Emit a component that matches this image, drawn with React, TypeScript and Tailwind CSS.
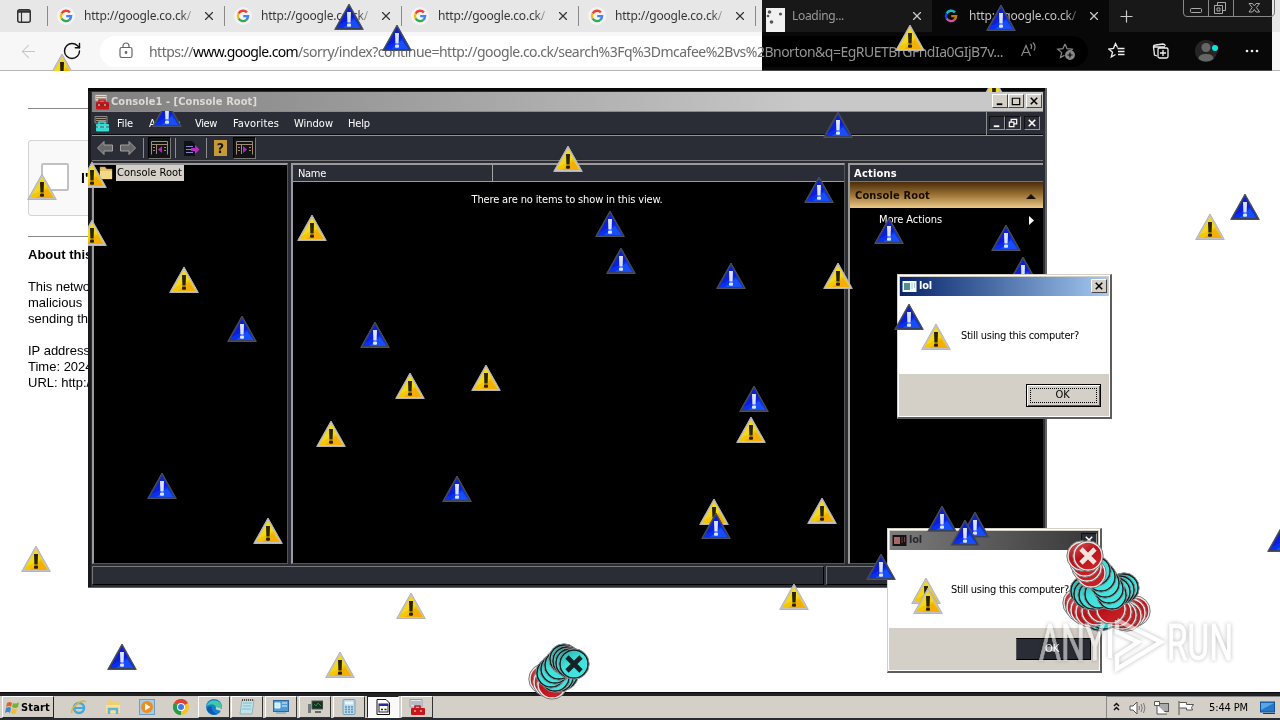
import { useLayoutEffect, useRef } from 'react'
import type { ReactNode } from 'react'
import { ArrowLeft, Plus, RotateCw, X } from 'lucide-react'

const URL_TAIL = '/sorry/index?continue=http://google.co.ck/search%3Fq%3Dmcafee%2Bvs%2Bnorton&q=EgRUETBrGFhdIa0GIjB7v...'

type Tone = 'yellow' | 'blue'
// x is the center, y the top edge
interface Marker {
  tone: Tone
  x: number
  y: number
  clip?: string
}

const markers: Marker[] = [
  { tone: 'yellow', x: 62, y: 53, clip: 'inset(0 0 10px 0)' },
  { tone: 'yellow', x: 910, y: 24 },
  { tone: 'yellow', x: 42, y: 173 },
  { tone: 'yellow', x: 92, y: 161, clip: 'inset(0 0 0 11px)' },
  { tone: 'yellow', x: 92, y: 219, clip: 'inset(0 0 0 11px)' },
  { tone: 'yellow', x: 312, y: 214 },
  { tone: 'yellow', x: 568, y: 145 },
  { tone: 'yellow', x: 184, y: 266 },
  { tone: 'yellow', x: 838, y: 262 },
  { tone: 'yellow', x: 410, y: 372 },
  { tone: 'yellow', x: 486, y: 364 },
  { tone: 'yellow', x: 331, y: 420 },
  { tone: 'yellow', x: 751, y: 416 },
  { tone: 'yellow', x: 714, y: 498 },
  { tone: 'yellow', x: 822, y: 497 },
  { tone: 'yellow', x: 268, y: 517 },
  { tone: 'yellow', x: 36, y: 545 },
  { tone: 'yellow', x: 411, y: 592 },
  { tone: 'yellow', x: 794, y: 583 },
  { tone: 'yellow', x: 340, y: 651 },
  { tone: 'yellow', x: 1210, y: 213 },
  { tone: 'yellow', x: 994, y: 77, clip: 'inset(11px 0 13px 0)' },
  { tone: 'blue', x: 349, y: 3 },
  { tone: 'blue', x: 397, y: 24 },
  { tone: 'blue', x: 1001, y: 4 },
  { tone: 'blue', x: 167, y: 100, clip: 'inset(11px 0 1px 0)' },
  { tone: 'blue', x: 838, y: 111 },
  { tone: 'blue', x: 819, y: 176 },
  { tone: 'blue', x: 610, y: 210 },
  { tone: 'blue', x: 621, y: 247 },
  { tone: 'blue', x: 731, y: 262 },
  { tone: 'blue', x: 889, y: 217 },
  { tone: 'blue', x: 1006, y: 224 },
  { tone: 'blue', x: 1023, y: 256, clip: 'inset(0 0 8px 0)' },
  { tone: 'blue', x: 242, y: 315 },
  { tone: 'blue', x: 375, y: 321 },
  { tone: 'blue', x: 754, y: 385 },
  { tone: 'blue', x: 162, y: 472 },
  { tone: 'blue', x: 457, y: 475 },
  { tone: 'blue', x: 716, y: 512 },
  { tone: 'blue', x: 122, y: 643 },
  { tone: 'blue', x: 1245, y: 193 },
  { tone: 'blue', x: 1282, y: 525 },
]

// drawn over the dialogs
const topMarkers: Marker[] = [
  { tone: 'blue', x: 909, y: 303 },
  { tone: 'blue', x: 942, y: 505 },
  { tone: 'blue', x: 975, y: 511 },
  { tone: 'blue', x: 965, y: 519 },
  { tone: 'blue', x: 881, y: 553 },
]

type Disc = [number, number, 'r' | 'c']

const discs: Disc[] = [
  [544, 679, 'r'], [548, 682, 'r'], [552, 684, 'r'],
  [563, 675, 'c'], [559, 677, 'c'], [555, 677, 'c'], [551, 673, 'c'],
  [555, 669, 'c'], [559, 665, 'c'], [564, 659, 'c'], [567, 661, 'c'], [570, 663, 'c'], [574, 664, 'c'],
  [1099, 616, 'c'], [1104, 615, 'c'],
  [1078, 603, 'r'], [1081, 607, 'r'], [1085, 610, 'r'], [1090, 612, 'r'], [1096, 611, 'r'], [1102, 608, 'r'],
  [1135, 611, 'r'], [1131, 613, 'r'], [1127, 616, 'r'], [1122, 615, 'r'], [1117, 612, 'r'], [1111, 609, 'r'],
  [1124, 588, 'c'], [1120, 590, 'c'],
  [1085, 591, 'c'], [1088, 594, 'c'], [1093, 595, 'c'], [1099, 594, 'c'],
  [1116, 592, 'c'], [1112, 595, 'c'], [1109, 589, 'c'], [1105, 583, 'c'], [1101, 577, 'c'], [1096, 571, 'c'],
  [1091, 573, 'r'], [1087, 567, 'r'], [1085, 562, 'r'], [1082, 556, 'r'],
  [1088, 556, 'r'],
]

// Spreads the letters so that the text fills exactly `w` pixels
function Fit({ w, className = '', children }: { w: number; className?: string; children: string }) {
  const ref = useRef<HTMLSpanElement>(null)
  useLayoutEffect(() => {
    const el = ref.current
    if (!el) return
    el.style.letterSpacing = '0px'
    const natural = el.getBoundingClientRect().width
    el.style.letterSpacing = `${(w - natural) / children.length}px`
  }, [w, children])
  return (
    <span ref={ref} className={`inline-block shrink-0 whitespace-pre ${className}`}>
      {children}
    </span>
  )
}

function Warning({ tone }: { tone: Tone }) {
  const blue = tone === 'blue'
  return (
    <svg width="30" height="28" viewBox="0 0 30 28" className="block">
      <path d="M15 1 L29.3 26.5 H0.7 Z" fill={blue ? '#3a4058' : '#c4c3c9'} stroke={blue ? '#4b5063' : '#b5b3b3'} strokeWidth="1" strokeLinejoin="round" />
      <path d="M15 4 L27 25 H3 Z" fill={blue ? '#0830ee' : '#f6c604'} />
      <path d="M15 4 L20.5 14 L5 22 Z" fill={blue ? '#0d18d2' : '#f1df1f'} opacity="0.75" />
      <path d="M20 16 L26.5 25 H9 Z" fill={blue ? '#1e5bff' : '#f2a40a'} opacity="0.7" />
      <path d="M13 9 H17 L16.6 19.5 H13.4 Z" fill={blue ? '#dce4fb' : '#28220f'} />
      <rect x="13" y="20.6" width="4" height="3.2" rx="1" fill={blue ? '#dce4fb' : '#28220f'} />
    </svg>
  )
}

function Discs() {
  const crossed = [12, discs.length - 1]
  return (
    <svg width="1280" height="720" viewBox="0 0 1280 720" className="absolute left-0 top-0">
      <defs>
        <linearGradient id="red" x1="0" y1="0" x2="0.6" y2="1">
          <stop offset="0" stopColor="#d8555a" />
          <stop offset="0.5" stopColor="#b81219" />
          <stop offset="1" stopColor="#cc2227" />
        </linearGradient>
        <linearGradient id="cyan" x1="0" y1="0" x2="0.6" y2="1">
          <stop offset="0" stopColor="#28aaa5" />
          <stop offset="0.5" stopColor="#41e0da" />
          <stop offset="1" stopColor="#3fe6e0" />
        </linearGradient>
      </defs>
      {discs.map(([x, y, c], i) => (
        <g key={i}>
          <circle cx={x} cy={y} r="15.2" fill={c === 'r' ? '#efeaea' : '#10191c'} stroke={c === 'r' ? '#777' : '#8a8f90'} strokeWidth="1" />
          <circle cx={x} cy={y} r="13.3" fill={c === 'r' ? 'url(#red)' : 'url(#cyan)'} />
          {crossed.includes(i) && (
            <path
              d={`M${x - 7} ${y - 7} L${x + 7} ${y + 7} M${x + 7} ${y - 7} L${x - 7} ${y + 7}`}
              stroke={c === 'r' ? '#efe6e2' : '#182325'}
              strokeWidth="4.6"
            />
          )}
        </g>
      ))}
    </svg>
  )
}

function GoogleIcon() {
  return (
    <svg width="18" height="18" viewBox="0 0 18 18" className="shrink-0">
      <circle cx="9" cy="9" r="9" fill="#f4f4f4" />
      <g fill="none" strokeWidth="2.4">
        <path d="M12.9 5.4 A5.1 5.1 0 0 0 4.6 6.5" stroke="#ea4335" />
        <path d="M4.6 6.5 A5.1 5.1 0 0 0 4.6 11.5" stroke="#fbbc05" />
        <path d="M4.6 11.5 A5.1 5.1 0 0 0 12.4 12.8" stroke="#34a853" />
        <path d="M12.4 12.8 A5.1 5.1 0 0 0 14.1 9.1 H9.2" stroke="#4285f4" />
      </g>
    </svg>
  )
}

function Tab({ title, active = false, loading = false }: { title: string; active?: boolean; loading?: boolean }) {
  return (
    <div className={`flex h-8 w-[177px] shrink-0 items-center ${active ? 'bg-[#f7f7f7]' : 'bg-[#e7e7e7]'}`}>
      <span className={`mr-[9px] h-[20px] w-px ${active ? 'bg-transparent' : 'bg-[#8a8a8a]'}`} />
      {loading ? <span className="w-[18px] shrink-0" /> : <GoogleIcon />}
      <div className="ml-[9px] w-[110px] overflow-hidden text-[12px] leading-8 text-[#333]">
        {loading ? (
          <Fit w={52} className="text-[#666]">{title}</Fit>
        ) : (
          <Fit w={107} className="bg-linear-to-r from-[#333] from-90% to-[#aaa] bg-clip-text text-transparent">{title}</Fit>
        )}
      </div>
      <X size={14} strokeWidth={2} className="ml-[8px] text-[#333]" />
    </div>
  )
}

function Browser() {
  return (
    <div className="w-full font-['Noto_Sans',sans-serif]">
      <div className="flex h-8 bg-[#e7e7e7]">
        <div className="flex w-[47px] shrink-0 items-center justify-center">
          <svg width="14" height="14" viewBox="0 0 14 14" fill="none" stroke="#333">
            <rect x="0.750" y="0.750" width="12.500" height="12.500" rx="2" strokeWidth="1.500" />
            <path d="M1 2.500 H13" strokeWidth="2.500" />
            <path d="M4.500 3 V13" strokeWidth="1.200" />
          </svg>
        </div>
        <Tab title="http://google.co.ck/" />
        <Tab title="http://google.co.ck/" />
        <Tab title="http://google.co.ck/" />
        <Tab title="http://google.co.ck/" />
        <Tab title="Loading..." loading />
        <Tab title="http://google.co.ck/" active />
        <div className="flex w-[34px] shrink-0 items-center justify-center">
          <Plus size={19} strokeWidth={1.5} className="text-[#333]" />
        </div>
        <svg width="97" height="20" viewBox="0 0 97 20" className="ml-[39px] shrink-0" fill="none" stroke="#777" strokeWidth="1">
          <path d="M1.5 0 V13 Q1.5 16.5 5 16.5 H88 Q92.5 16.5 92.5 12 V0 M26.5 0 V16 M51.5 0 V16" />
          <rect x="8.500" y="8.500" width="11" height="4" rx="1" stroke="#555" />
          <path d="M32.500 5.500 h8 v8 h-8 z M35.500 5 v-2.500 h8 v8 h-3 M35 8 h3 v3 h-3 z" stroke="#555" />
          <path d="M67 3.500 h3.500 l1.800 2.400 l1.800 -2.400 h3.500 l-3.200 4 l3.200 4.500 h-3.500 l-1.800 -2.500 l-1.800 2.500 h-3.500 l3.200 -4.500 z" stroke="#555" />
        </svg>
      </div>
      <div className="flex h-[39px] items-center border-b border-[#b5b5b5] bg-[#f7f7f7]">
        <ArrowLeft size={21} strokeWidth={1.2} className="ml-[18px] shrink-0 text-[#c6c6c6]" />
        <RotateCw size={20} strokeWidth={1.7} className="ml-[23px] shrink-0 text-[#111]" />
        <div className="ml-[18px] flex h-[31px] w-[988px] shrink-0 items-center rounded-full bg-white pl-[20px] text-[14px] leading-[31px] text-[#6b6b6b]">
          <svg width="14" height="17" viewBox="0 0 14 17" fill="none" stroke="#666" strokeWidth="1.2" className="mb-[2px] ml-[-1px] mr-[16px] shrink-0">
            <rect x="1" y="5.500" width="12" height="10" rx="1.800" />
            <path d="M4 5.500 V4 a3 3 0 0 1 6 0 V5.500" />
            <circle cx="7" cy="10.500" r="0.800" fill="#666" />
          </svg>
          <Fit w={44}>https://</Fit>
          <Fit w={105} className="text-black">www.google.com</Fit>
          <Fit w={705}>{URL_TAIL}</Fit>
          <svg width="60" height="20" viewBox="0 0 60 20" fill="none" stroke="#777" strokeWidth="1.2" className="ml-[17px] shrink-0">
            <path d="M1.500 15 L6 4.500 L10.500 15 M3 11.500 H9 M10.500 3 q2 2 0.500 5 M13 1.500 q3.500 3.500 1 8" />
            <path d="M45 3 l2 4.600 l5.300 0.500 l-3.800 3.500 M45 3 l-2 4.600 l-5.300 0.500 l4 3.500 l-1.200 5 l4 -2.300" />
            <circle cx="50" cy="14" r="4.300" fill="#777" />
            <path d="M50 11.500 v5 M47.500 14 h5" stroke="#fff" />
          </svg>
        </div>
        <svg width="170" height="24" viewBox="0 0 170 24" fill="none" stroke="#111" strokeWidth="1.300" className="ml-[20px] shrink-0">
          <path d="M9.500 8.500 L7.500 4.500 L5.500 9.300 L0.800 10 L4.500 13.200 L3.300 18 L7.500 15.500 M9.500 9.500 H16.500 M10 12.500 H16.500 M10 15.500 H16.500" />
          <path d="M49 17 l-2.500 -1 l-1 -8 q0 -2 2 -2 l7.500 -1 q2 0 2.300 2 M46 8 h11" />
          <rect x="50" y="9" width="10" height="10" rx="1.500" />
          <path d="M55 11 v6 M52 14 h6" />
          <circle cx="98" cy="12" r="11" fill="#dadada" stroke="none" />
          <circle cx="98" cy="8.500" r="4.500" fill="#999" stroke="none" />
          <path d="M90.500 20 q0 -5 7.500 -5 t7.500 5 q-7.500 5 -15 0" fill="#999" stroke="none" />
          <circle cx="107" cy="9" r="3" fill="#ee1c20" stroke="none" />
          <g fill="#111" stroke="none">
            <circle cx="139" cy="12" r="1.300" />
            <circle cx="144" cy="12" r="1.300" />
            <circle cx="149" cy="12" r="1.300" />
          </g>
        </svg>
      </div>
    </div>
  )
}

function PageText() {
  return (
    <div className="ml-[28px] w-[300px] pt-[37px] font-['Liberation_Sans',sans-serif] text-[13px] leading-4 text-black">
      <div className="h-px bg-[#888]" />
      <div className="mt-[31px] flex h-[76px] items-center rounded-[3px] border border-[#d3d3d3] bg-[#f9f9f9] pl-[12px]">
        <div className="mb-[3px] h-[28px] w-[28px] rounded-[2px] border-2 border-[#c1c1c1] bg-white" />
        <span className="ml-[12px] text-[14px] font-bold">I'</span>
      </div>
      <div className="mt-[20px] h-px bg-[#888]" />
      <div className="mt-[10px] font-bold">About this</div>
      <div className="mt-[16px] whitespace-nowrap">
        <Fit w={62}>This netwo</Fit>
        <br />
        malicious
        <br />
        sending th
      </div>
      <div className="mt-[16px]">
        IP address
        <br />
        Time: 2024
        <br />
        URL: http:/
      </div>
    </div>
  )
}

function CaptionButton({ kind, dark = false }: { kind: 'min' | 'max' | 'restore' | 'close'; dark?: boolean }) {
  const glyph = {
    min: <path d="M4 10 H10" strokeWidth="2" />,
    max: <path d="M3.500 3.500 H11.500 V10.500 H3.500 Z M3 3.500 H12" strokeWidth="1.300" />,
    restore: <path d="M5.500 5 V2.500 H11.500 V7.500 H9 M3.500 5.500 H8.500 V10.500 H3.500 Z" strokeWidth="1.300" />,
    close: <path d="M4 3 L11 10 M11 3 L4 10" strokeWidth="1.700" />,
  }[kind]
  return (
    <span
      className={`block h-[14px] w-4 border ${
        dark ? 'border-b-[#9a9a9a] border-l-[#111] border-r-[#9a9a9a] border-t-[#111] bg-[#2a2d35] text-white' : 'border-b-[#444] border-l-white border-r-[#444] border-t-white bg-[#d4d0c8] text-black'
      }`}
    >
      <svg width="14" height="12" viewBox="0 0 15 13" fill="none" stroke="currentColor">
        {glyph}
      </svg>
    </span>
  )
}

function Toolbox({ color }: { color: string }) {
  return (
    <svg width="16" height="16" viewBox="0 0 16 16" className="shrink-0">
      <path d="M1 0.500 H13 V7 H1 Z" fill={color === '#c4161c' ? '#dadce3' : '#30343a'} stroke="#888" />
      <path d="M2 2.500 H12 M2 4.500 H12" stroke="#a49382" />
      <path d="M5 8 V6 H11 V8" fill="none" stroke={color} strokeWidth="1.500" />
      <rect x="2" y="8" width="13" height="7.500" rx="1" fill={color} />
      <path d="M2 11 H15" stroke="#333" strokeWidth="0.700" />
      <path d="M5 10 v2 M11 10 v2" stroke="#eee" />
    </svg>
  )
}

function PaneIcon({ flip = false }: { flip?: boolean }) {
  return (
    <span className="flex h-[22px] w-[23px] items-center justify-center border border-b-[#777] border-l-black border-r-[#777] border-t-black bg-[#121315]">
      <svg width="17" height="14" viewBox="0 0 17 14" fill="none" stroke="#a08c74">
        <path d="M0.500 0.500 H16.500 V13.500 M0.500 0.500 V13.500 M0 3.500 H17 M5.500 4 V13 M2 6.500 h2 M2 9.500 h2 M13 6.500 h2 M13 9.500 h2" />
        <path d={flip ? 'M7 5 L11 8.500 L7 12 Z' : 'M11 5 L7 8.500 L11 12 Z'} fill="#c41ccc" stroke="none" />
      </svg>
    </span>
  )
}

function Arrow({ right = false }: { right?: boolean }) {
  return (
    <svg width="18" height="16" viewBox="0 0 18 16" className={right ? 'rotate-180' : ''}>
      <path d="M1.500 8 L8 1.500 V5 H16.500 V11 H8 V14.500 Z" fill="#676767" stroke="#a1a1a1" />
    </svg>
  )
}

function Console() {
  const menus: [string, number, string][] = [
    ['File', 16, 'ml-[7px]'],
    ['Action', 32, 'ml-[16px]'],
    ['View', 22, 'ml-[14px]'],
    ['Favorites', 46, 'ml-[16px]'],
    ['Window', 39, 'ml-[15px]'],
    ['Help', 22, 'ml-[15px]'],
  ]
  return (
    <div className="absolute left-[88px] top-[88px] flex h-[500px] w-[959px] flex-col border-b border-r-2 border-[#626262] bg-[#2a2d35] pb-[2px] pl-[4px] pr-[2px] pt-[4px] font-['DejaVu_Sans_Condensed','DejaVu_Sans',sans-serif] text-[11px] text-white shadow-[inset_0_3px_0_#070809,inset_3px_0_0_#17191d]">
      <div className="flex h-[19px] shrink-0 items-center bg-linear-to-r from-[#808080] to-[#c8c8c8] to-75% pl-[2px] pr-px font-bold text-[#dedad4]">
        <Toolbox color="#c4161c" />
        <Fit w={146} className="ml-px pt-px">Console1 - [Console Root]</Fit>
        <div className="mb-[2px] ml-auto flex">
          <CaptionButton kind="min" />
          <CaptionButton kind="max" />
          <span className="w-[2px]" />
          <CaptionButton kind="close" />
        </div>
      </div>
      <div className="flex h-[25px] shrink-0 items-center border-b border-t border-b-[#949494] border-t-[#8a8a8a] pl-[2px] shadow-[inset_0_-1px_0_#08090b]">
        <Toolbox color="#35dcd6" />
        {menus.map(([name, w, gap]) => (
          <Fit key={name} w={w} className={`pt-[2px] ${gap}`}>{name}</Fit>
        ))}
        <div className="ml-auto flex h-[23px] items-center border-l border-[#8d8d8d] pb-px pl-[2px] pr-[3px]">
          <CaptionButton kind="min" dark />
          <CaptionButton kind="restore" dark />
          <span className="w-[3px]" />
          <CaptionButton kind="close" dark />
        </div>
      </div>
      <div className="flex h-[25px] shrink-0 items-center border-b border-[#777] pl-[4px]">
        <Arrow />
        <span className="w-[5px]" />
        <Arrow right />
        <span className="ml-[6px] mr-[4px] h-[20px] w-px bg-[#8d8d8d]" />
        <PaneIcon />
        <span className="ml-[4px] mr-[7px] h-[20px] w-px bg-[#8d8d8d]" />
        <svg width="17" height="17" viewBox="0 0 17 17">
          <path d="M1 1 H9 L12 4 V16 H1 Z" fill="#101016" />
          <path d="M3 6.500 h7 M3 9.500 h6 M3 12.500 h7" stroke="#8888c8" />
          <path d="M8 8 H12 V5 L16.500 9.500 L12 14 V11 H8 Z" fill="#bb2ac8" />
        </svg>
        <span className="ml-[6px] mr-[7px] h-[20px] w-px bg-[#8d8d8d]" />
        <span className="flex h-4 w-[13px] items-center justify-center bg-[#c79a38] text-[14px] font-bold text-[#151515]">?</span>
        <span className="w-[6px]" />
        <PaneIcon flip />
      </div>
      <div className="mt-[2px] flex min-h-0 flex-1 gap-[3px]">
        <div className="w-[196px] border-b border-l-2 border-r border-t-2 border-[#9a9a9a] border-b-[#555] border-r-[#555] bg-black">
          <div className="flex h-[16px] items-center">
            <svg width="20" height="16" viewBox="0 0 20 16">
              <path d="M6 2 h5 l1.500 2 h5.500 v10 H6 z" fill="#e8c065" stroke="#b18c3c" strokeWidth="0.500" />
              <path d="M6 6 h12 v8 H6 z" fill="#f5d98a" />
            </svg>
            <span className="ml-[2px] flex h-[16px] w-[68px] items-center bg-[#d4d0c8] pl-px pt-px text-black">
              <Fit w={65}>Console Root</Fit>
            </span>
          </div>
        </div>
        <div className="w-[554px] border-b border-l-2 border-r border-t-2 border-[#9a9a9a] border-b-[#555] border-r-[#555] bg-black">
          <div className="flex h-[17px] items-center border-b border-[#9a9a9a] bg-[#2a2d35]">
            <span className="flex h-[16px] w-[200px] items-center border-r border-[#a4a4a4] pl-[5px] pt-[3px]">
              <Fit w={28}>Name</Fit>
            </span>
          </div>
          <div className="pr-[3px] pt-[10px] text-center leading-4">
            <Fit w={191}>There are no items to show in this view.</Fit>
          </div>
        </div>
        <div className="flex-1 border-b border-l-2 border-t-2 border-[#9a9a9a] border-b-[#555] bg-black">
          <div className="flex h-[17px] items-center border-b border-[#777] bg-[#2a2d35] pl-[4px] pt-[3px] font-bold">
            <Fit w={43}>Actions</Fit>
          </div>
          <div className="flex h-[26px] items-center justify-between bg-linear-to-b from-[#4a2d0a] via-[#9c7435] to-[#ecca88] pl-[5px] pr-[7px] pt-[2px] font-bold text-[#160d02]">
            <Fit w={75}>Console Root</Fit>
            <svg width="10" height="5"><path d="M0 5 L5 0 L10 5 Z" fill="#1a1208" /></svg>
          </div>
          <div className="flex h-[24px] items-center justify-between pl-[29px] pr-[9px] pt-px">
            <Fit w={63}>More Actions</Fit>
            <svg width="5" height="9"><path d="M0 0 L5 4.500 L0 9 Z" fill="#fff" /></svg>
          </div>
        </div>
      </div>
      <div className="mt-[2px] flex h-[19px] shrink-0 gap-[2px]">
        <div className="w-[732px] border border-b-black border-l-[#777] border-r-black border-t-[#777]" />
        <div className="flex-1 border border-b-black border-l-[#777] border-r-black border-t-[#777]" />
      </div>
    </div>
  )
}

function Dialog({ inactive = false, icon }: { inactive?: boolean; icon: ReactNode }) {
  return (
    <div className="flex h-[145px] w-[215px] flex-col border-b-2 border-l border-r-2 border-t border-b-[#5d5d5d] border-l-[#d4d0c8] border-r-[#5d5d5d] border-t-[#d4d0c8] bg-white p-px font-['DejaVu_Sans_Condensed','DejaVu_Sans',sans-serif] text-[11px] text-black">
      <div
        className={`flex h-[20px] shrink-0 items-center border border-b-0 border-[#d4d0c8] pl-[2px] pr-px font-bold ${
          inactive ? 'bg-linear-to-r from-[#7d7d7d] to-[#373737] text-[#28292d]' : 'bg-linear-to-r from-[#0a246a] to-[#a6caf0] text-white'
        }`}
      >
        <svg width="15" height="13" viewBox="0 0 15 13">
          <rect x="0.500" y="1" width="14" height="11" fill={inactive ? '#171113' : '#f3f8fa'} />
          <rect x="2" y="3" width="6" height="7" fill={inactive ? '#a96668' : '#4d9190'} />
          <path d="M10 3 v6 M12.500 3 v5" stroke={inactive ? '#704040' : '#a9cdd3'} />
        </svg>
        <Fit w={13} className="ml-[2px]">lol</Fit>
        <div className="mb-[2px] ml-auto">
          <CaptionButton kind="close" dark={inactive} />
        </div>
      </div>
      <div className="flex flex-1 items-center pl-[22px] pt-[3px]">
        {icon}
        <Fit w={118} className="ml-[10px]">Still using this computer?</Fit>
      </div>
      <div className="flex h-[42px] shrink-0 items-center justify-end border-x border-[#d4d0c8] bg-[#d4d0c8] pr-[7px]">
        {inactive ? (
          <div className="flex h-[22px] w-[75px] items-center justify-center border border-b-black border-l-[#555] border-r-black border-t-black bg-[#2a2d35] pr-[3px] text-white">
            <Fit w={14}>OK</Fit>
          </div>
        ) : (
          <div className="h-[23px] w-[75px] border border-black bg-[#d4d0c8] p-[3px] shadow-[inset_1px_1px_0_white,inset_-1px_-1px_0_#555]">
            <div className="flex h-full items-center justify-center border border-dotted border-black pr-[2px] pt-px">
              <Fit w={14}>OK</Fit>
            </div>
          </div>
        )}
      </div>
    </div>
  )
}

const taskIcons: ReactNode[] = [
  <g key="ie">
    <ellipse cx="8" cy="9" rx="5" ry="5" fill="none" stroke="#42a9df" strokeWidth="2.500" />
    <path d="M4 9 H13" stroke="#42a9df" strokeWidth="2" />
    <path d="M1 14 C-1 9 11 -1 15 3" fill="none" stroke="#e3b62d" strokeWidth="1.500" />
  </g>,
  <g key="explorer">
    <path d="M2 1 h5 l1 2 h6 v10 H2 z" fill="#efcf73" />
    <path d="M1 6 h14 v8 H1 z" fill="#f6e19b" />
    <path d="M4 15 v-5 h8 v5" fill="none" stroke="#62b3db" strokeWidth="2.500" />
  </g>,
  <g key="player">
    <rect x="0.500" y="0.500" width="15" height="15" fill="#a5cde9" stroke="#6d9dc5" />
    <circle cx="8" cy="8" r="6" fill="#ee8d1b" />
    <path d="M6 4.500 L11.500 8 L6 11.500 Z" fill="#fff" />
  </g>,
  <g key="chrome">
    <circle cx="8" cy="8" r="8" fill="#f5c326" />
    <path d="M8 8 L1 4 A8 8 0 0 1 15 4 Z" fill="#dd4437" />
    <path d="M8 8 L1 4 A8 8 0 0 0 8 16 Z" fill="#269b4a" />
    <circle cx="8" cy="8" r="4" fill="#fff" />
    <circle cx="8" cy="8" r="3" fill="#3d7de8" />
  </g>,
  <g key="edge">
    <circle cx="8" cy="8" r="8" fill="#1681cf" />
    <path d="M0.500 7 A8 8 0 0 1 16 8 Q16 11 11 11 Q9 10 10 8 Q8 3 0.500 7 Z" fill="#43c8a6" />
    <path d="M6 8 Q5 13 11 15 A8 8 0 0 1 1 11 Q1 6 6 8" fill="#0d5ba9" />
    <path d="M10 8 Q9 11 14 11.500 L15.500 13 L16 10 Z" fill="#d4d0c8" />
  </g>,
  <g key="notepad">
    <path d="M3 1 H15 L13 15 H1 Z" fill="#bfe2ec" stroke="#7aa1ac" strokeWidth="0.700" />
    <path d="M4 4 h9 M4 7 h8 M3 10 h9" stroke="#81bccd" />
    <path d="M3 1 h12" stroke="#555" strokeDasharray="1 1" strokeWidth="2" />
  </g>,
  <g key="osk">
    <rect x="0.500" y="1.500" width="15" height="11" fill="#4e9cd5" stroke="#2d689f" />
    <path d="M2 4 h5 v5 h-5 z M9 4 h5 M9 7 h5" fill="#d2ecf9" stroke="#eef" />
    <path d="M3 13 h10 v2 H3 z" fill="#9bb5c4" />
  </g>,
  <g key="monitor">
    <rect x="5" y="2" width="11" height="8" fill="#12331f" stroke="#555" />
    <path d="M7 5 l2 2 l2 -3 l3 3" fill="none" stroke="#2b8c49" />
    <rect x="1" y="5" width="3" height="9" fill="#757a7b" />
    <path d="M8 13 h6" stroke="#666" strokeWidth="2" />
  </g>,
  <g key="calc">
    <rect x="2" y="0.500" width="12" height="15" rx="1" fill="#bcd7e7" stroke="#769fb8" />
    <rect x="4" y="2.500" width="8" height="3" fill="#e9f7fa" />
    <path d="M4 8 h8 M4 10.500 h8 M4 13 h8" stroke="#5696bf" strokeDasharray="2 1" strokeWidth="1.500" />
  </g>,
  <g key="doc">
    <path d="M2 0.500 H11 L14.500 4 V15.500 H2 Z" fill="#fff" stroke="#111" />
    <rect x="4" y="5" width="9" height="8" fill="#fff" stroke="#222" />
    <path d="M4 6 h9" stroke="#232ba0" strokeWidth="2" />
    <path d="M6 10.500 h2 M9.500 10.500 h2" stroke="#222" strokeWidth="1.500" />
  </g>,
  <g key="mmc">
    <path d="M1 0.500 H13 V8 H1 Z" fill="#e4e6ea" stroke="#999" />
    <path d="M2 3 h10 M2 5 h10" stroke="#8691a3" />
    <path d="M6 9 V7 H11 V9" fill="none" stroke="#b9151b" strokeWidth="1.500" />
    <rect x="2" y="9" width="14" height="7" rx="1" fill="#c5161c" />
    <path d="M6 11 v2 M12 11 v2" stroke="#eee" />
  </g>,
]

function Taskbar() {
  return (
    <div className="absolute bottom-0 left-0 flex h-[27px] w-full items-start border-b-2 border-t-[3px] border-b-[#292b32] border-t-[#202226] bg-[#d4d0c8] font-['DejaVu_Sans_Condensed','DejaVu_Sans',sans-serif] text-[11px] text-black shadow-[0_-1px_0_#09090a]">
      <div className="ml-[2px] flex h-[22px] w-[52px] items-center border border-b-[#222] border-l-white border-r-[#222] border-t-white pl-[2px] font-bold">
        <svg width="15" height="15" viewBox="0 0 15 15">
          <path d="M2 3 Q5 1 7 3 L6 7 Q4 5 1 7 Z" fill="#df622d" />
          <path d="M8 3 Q11 4.500 14 2 L13 7 Q10 9 7 7 Z" fill="#6fb53a" />
          <path d="M1 8 Q4 6 6 8 L5 13 Q3 11 0 13 Z" fill="#3c87cd" />
          <path d="M7 8 Q10 10 12 8 L11 13 Q8 15 6 13 Z" fill="#f3bd31" />
        </svg>
        <Fit w={29} className="ml-px pt-[2px]">Start</Fit>
      </div>
      <div className="ml-[8px] flex h-[22px]">
        {taskIcons.map((icon, i) => (
          <div
            key={i}
            className={`flex h-[22px] items-center justify-center border ${i < 4 ? 'w-[34px]' : 'mr-[2px] w-8'} ${
              i < 4
                ? 'border-transparent'
                : i === 9
                  ? 'border-b-white border-l-[#222] border-r-white border-t-[#222] bg-[#fafafa]'
                  : 'border-b-[#333] border-l-white border-r-[#333] border-t-white'
            } ${i > 4 ? 'relative -left-px' : ''}`}
          >
            <svg width="16" height="16" viewBox="0 0 16 16">{icon}</svg>
          </div>
        ))}
      </div>
      <div className="ml-auto flex h-[22px] w-[174px] items-center border-l border-t border-[#888] pl-[6px]">
        <svg width="82" height="18" viewBox="0 0 82 18" fill="none" stroke="#555">
          <path d="M1 7 L3.500 4.500 L6 7 M1 11 L3.500 8.500 L6 11" stroke="#111" strokeWidth="1.500" />
          <path d="M17 7 h3 l4 -4 v12 l-4 -4 h-3 z" fill="#fff" />
          <path d="M26 7 q1 2 0 4 M28 5 q2.500 4 0 8 M30.500 4 q3 5 0 10" stroke="#777" />
          <rect x="44.500" y="4.500" width="11" height="8" fill="#aaa" />
          <path d="M41.500 2.500 h5 v4 h-5 z M44 6 v9 h10" fill="#fff" />
          <path d="M66 2 V16 M66.500 3.500 h7 v2 h7 l-2 3 l1 2.500 h-6 v-2 h-7" fill="#fff" />
        </svg>
        <Fit w={39} className="ml-[14px] pt-px">5:44 PM</Fit>
        <svg width="17" height="14" viewBox="0 0 17 14" className="ml-[12px]">
          <rect x="0.500" y="1" width="14" height="10" fill="#2378c8" stroke="#155095" />
          <path d="M1 2 L14 2 L1 9 Z" fill="#59a6e5" />
          <path d="M3 12.500 h12" stroke="#173b68" />
        </svg>
      </div>
    </div>
  )
}

function Watermark() {
  return (
    <svg
      width="240"
      height="80"
      viewBox="0 0 240 80"
      className="absolute left-[1030px] top-[608px] font-['Roboto',sans-serif] opacity-55 drop-shadow-[0_0_2px_rgba(0,0,0,0.5)]"
      fill="#fff"
      stroke="#fff"
    >
      <text x="9" y="52" textLength="66" lengthAdjust="spacingAndGlyphs" fontSize="50" strokeWidth="0.8">ANY</text>
      <path d="M80 16 V50 M87 12 L131 34 L87 61 V48 L108 34 L87 24 V12" fill="none" strokeWidth="4.500" />
      <text x="137" y="52" textLength="66" lengthAdjust="spacingAndGlyphs" fontSize="50" strokeWidth="0.8">RUN</text>
    </svg>
  )
}

export default function App() {
  return (
    <div className="relative h-[720px] w-[1280px] overflow-hidden bg-white">
      <Browser />
      <PageText />

      {/* color-flipped strip of the browser */}
      <div className="absolute left-[762px] top-0 h-[71px] w-[510px] backdrop-invert" />
      <svg width="19" height="24" viewBox="0 0 19 24" className="absolute left-[766px] top-[8px]">
        <rect width="19" height="24" fill="#f1f1f1" />
        <g fill="#555">
          <circle cx="3.500" cy="4" r="1.800" />
          <circle cx="14.500" cy="6" r="1.600" />
          <circle cx="2" cy="8" r="1.300" />
          <circle cx="5.500" cy="14" r="1.800" />
        </g>
      </svg>

      <Console />

      {markers.map((m, i) => (
        <div key={i} className="absolute" style={{ left: m.x - 15, top: m.y, clipPath: m.clip }}>
          <Warning tone={m.tone} />
        </div>
      ))}

      <div className="absolute left-[897px] top-[274px]">
        <Dialog icon={<Warning tone="yellow" />} />
      </div>
      <div className="absolute left-[887px] top-[528px]">
        <Dialog
          inactive
          icon={
            <span className="relative block">
              <Warning tone="yellow" />
              <span className="absolute left-[2px] top-[10px]"><Warning tone="yellow" /></span>
            </span>
          }
        />
      </div>

      {topMarkers.map((m, i) => (
        <div key={i} className="absolute" style={{ left: m.x - 15, top: m.y }}>
          <Warning tone={m.tone} />
        </div>
      ))}

      <Taskbar />
      <Discs />
      <Watermark />
    </div>
  )
}
